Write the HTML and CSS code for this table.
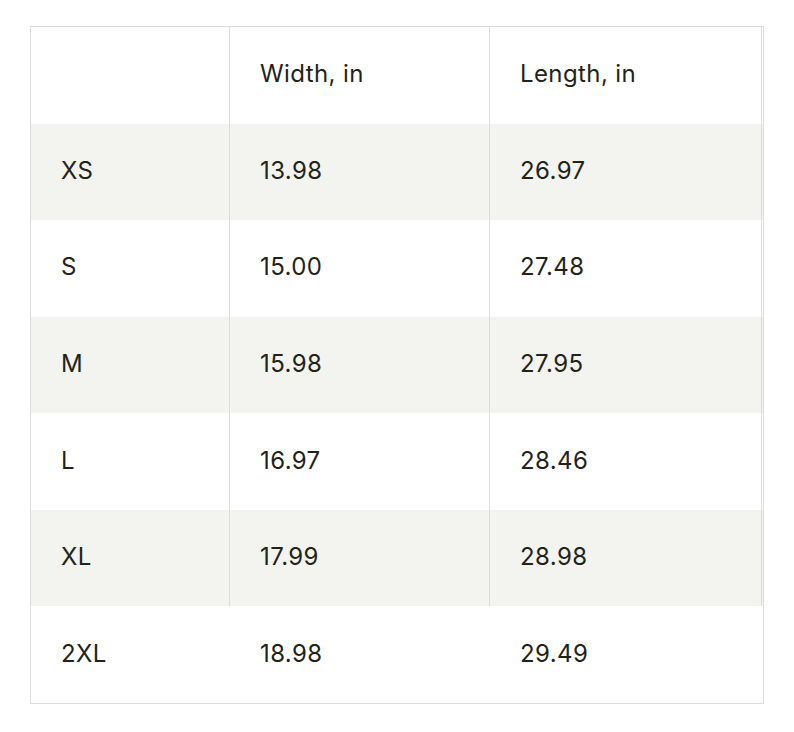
FILE: index.html
```html
<!DOCTYPE html>
<html>
<head>
<meta charset="utf-8">
<link rel="stylesheet" href="styles.css">
</head>
<body>
<div class="page">
  <div class="chart">
    <div class="row">
      <div class="cell"></div>
      <div class="cell">Width, in</div>
      <div class="cell">Length, in</div>
    </div>
    <div class="row alt">
      <div class="cell">XS</div>
      <div class="cell">13.98</div>
      <div class="cell">26.97</div>
    </div>
    <div class="row">
      <div class="cell">S</div>
      <div class="cell">15.00</div>
      <div class="cell">27.48</div>
    </div>
    <div class="row alt">
      <div class="cell">M</div>
      <div class="cell">15.98</div>
      <div class="cell">27.95</div>
    </div>
    <div class="row">
      <div class="cell">L</div>
      <div class="cell">16.97</div>
      <div class="cell">28.46</div>
    </div>
    <div class="row alt">
      <div class="cell">XL</div>
      <div class="cell">17.99</div>
      <div class="cell">28.98</div>
    </div>
    <div class="row last">
      <div class="cell">2XL</div>
      <div class="cell">18.98</div>
      <div class="cell">29.49</div>
    </div>
  </div>
</div>
</body>
</html>
```

FILE: styles.css
```css
html, body {
  margin: 0;
  padding: 0;
  background: #ffffff;
}

.page {
  padding: 26px 30px;
}

.chart {
  width: 732px;
  border: 1px solid #dcdcda;
  font-family: "Inter", "Liberation Sans", sans-serif;
  font-size: 24px;
  letter-spacing: 0.4px;
  color: #1f2418;
}

.row {
  display: grid;
  grid-template-columns: 199px 260px 272px;
  height: 96.57px;
}

.row.alt {
  background: #f3f3ef;
}

.cell {
  display: flex;
  align-items: center;
  padding-left: 30px;
  padding-bottom: 3px;
  box-sizing: border-box;
  border-right: 1px solid #dcdcda;
}

.row.last .cell {
  border-right: none;
}
```
